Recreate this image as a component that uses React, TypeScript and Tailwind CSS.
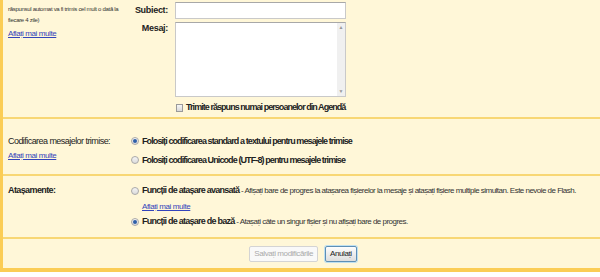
import React from "react";

const FONT = { fontFamily: '"Liberation Sans", Arial, sans-serif' };

const Radio = ({ checked }: { checked?: boolean }) => (
  <span className="inline-flex h-[8px] w-[8px] shrink-0 items-center justify-center rounded-full border border-[#a9a9a9] bg-gradient-to-b from-[#f4f4f4] to-[#dcdcdc]">
    {checked && <span className="h-[4px] w-[4px] rounded-full bg-[#2f5fa8]" />}
  </span>
);

const Link = ({ children }: { children: React.ReactNode }) => (
  <a className="text-[8px] tracking-[-0.4px] text-[#3344bb] underline">{children}</a>
);

export default function App() {
  return (
    <div className="h-[277px] w-[600px] bg-white text-[#222]" style={FONT}>
      <div className="flex h-[272px] flex-col border-b-[4px] border-l-[3px] border-[#fbcd55] bg-[#fff7d8]">
        {/* Vacation responder */}
        <div className="flex h-[117px] shrink-0">
          <div className="w-[128px] shrink-0 pl-[5px] pt-[4px]">
            <p className="text-[6px] leading-[11px] tracking-[-0.3px] text-[#333]">
              răspunsul automat va fi trimis cel mult o dată la
              <br />
              fiecare 4 zile)
            </p>
            <div className="leading-[10px]">
              <Link>Aflați mai multe</Link>
            </div>
          </div>
          <div className="flex flex-col pt-[2px]">
            <div className="flex items-start">
              <div className="flex w-[44px] shrink-0 flex-col items-end pr-[7px] text-[9px] font-bold tracking-[-0.3px]">
                <span className="flex h-[17px] items-center">Subiect:</span>
                <span className="mt-[4px] flex h-[12px] items-center">Mesaj:</span>
              </div>
              <div className="flex flex-col gap-[3px]">
                <div className="h-[17px] w-[171px] border border-[#c9c9c9] border-t-[#a8a8a8] bg-white" />
                <div className="flex h-[75px] w-[171px] border border-[#c9c9c9] border-t-[#a8a8a8] bg-white">
                  <div className="flex-1" />
                  <div className="flex w-[8px] flex-col items-center justify-between bg-[#f0f0f0] py-[2px] text-[5px] leading-[5px] text-[#999]">
                    <span>▲</span>
                    <span>▼</span>
                  </div>
                </div>
              </div>
            </div>
            <label className="mt-[4px] ml-[45px] flex items-center gap-[3px] text-[9px] font-bold tracking-[-0.95px]">
              <span className="h-[8px] w-[7px] shrink-0 border border-[#9a9a9a] bg-gradient-to-b from-[#f6f6f6] to-[#d8d8d8]" />
              Trimite răspuns numai persoanelor din Agendă
            </label>
          </div>
        </div>

        <div className="h-[2px] shrink-0 bg-[#f8d774]" />

        {/* Encoding */}
        <div className="flex h-[55px] shrink-0 pt-[16px]">
          <div className="w-[128px] shrink-0 pl-[5px]">
            <div className="text-[9px] leading-[12px] tracking-[-0.55px]">Codificarea mesajelor trimise:</div>
            <div className="leading-[11px]">
              <Link>Aflați mai multe</Link>
            </div>
          </div>
          <div className="flex flex-col gap-[7px] text-[9px] font-bold leading-[12px] tracking-[-0.9px]">
            <div className="flex items-center gap-[3px]">
              <Radio checked />
              Folosiți codificarea standard a textului pentru mesajele trimise
            </div>
            <div className="flex items-center gap-[3px]">
              <Radio />
              Folosiți codificarea Unicode (UTF-8) pentru mesajele trimise
            </div>
          </div>
        </div>

        <div className="h-[2px] shrink-0 bg-[#f8d774]" />

        {/* Attachments */}
        <div className="flex h-[61px] shrink-0 pt-[8px]">
          <div className="w-[128px] shrink-0 pl-[5px] text-[9px] font-bold leading-[12px] tracking-[-0.6px]">
            Atașamente:
          </div>
          <div className="flex flex-col text-[8px] leading-[12px] tracking-[-0.52px] text-[#333]">
            <div className="flex items-center gap-[3px] whitespace-nowrap">
              <Radio />
              <span>
                <b className="text-[9px] tracking-[-0.75px] text-[#222]">Funcții de atașare avansată</b> - Afișați bare
                de progres la atașarea fișierelor la mesaje și atașați fișiere multiple simultan. Este nevoie de Flash.
              </span>
            </div>
            <div className="ml-[11px] mt-[4px] leading-[12px] tracking-normal">
              <Link>Aflați mai multe</Link>
            </div>
            <div className="mt-[2px] flex items-center gap-[3px] whitespace-nowrap">
              <Radio checked />
              <span>
                <b className="text-[9px] tracking-[-0.75px] text-[#222]">Funcții de atașare de bază</b> - Atașați câte un
                singur fișier și nu afișați bare de progres.
              </span>
            </div>
          </div>
        </div>

        <div className="h-[2px] shrink-0 bg-[#f8d774]" />

        {/* Buttons */}
        <div className="flex flex-1 items-center justify-center gap-[7px] pl-[3px]">
          <button className="h-[16px] rounded-[2px] border border-[#d4d4d4] bg-[#f9f9f9] px-[4px] text-[8px] tracking-[-0.4px] text-[#aaa]">
            Salvați modificările
          </button>
          <button className="h-[16px] rounded-[2px] border border-[#5d8fb6] bg-gradient-to-b from-[#fdfdfd] to-[#dedede] px-[4px] text-[8px] tracking-[-0.4px] text-[#222] shadow-[0_0_0_1px_#bfe0f0]">
            Anulați
          </button>
        </div>
      </div>
    </div>
  );
}
